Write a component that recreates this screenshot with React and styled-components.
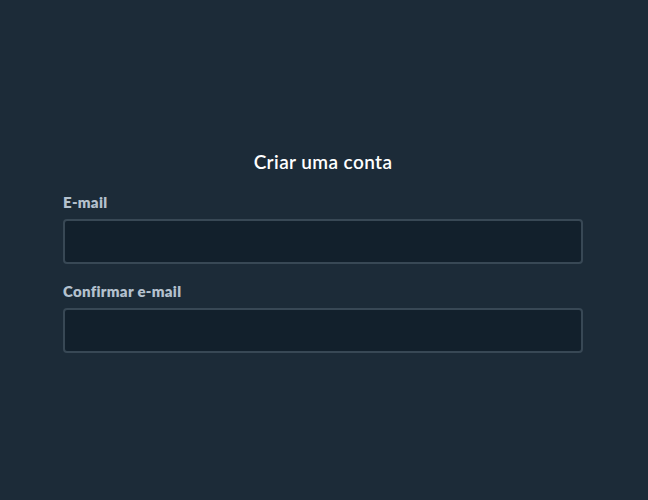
import React from 'react'
import styled, { createGlobalStyle } from 'styled-components'

const Global = createGlobalStyle`
  html, body {
    margin: 0;
    background: #1c2b38;
    font-family: Lato, "Open Sans", sans-serif;
  }
`

const Page = styled.div`
  min-height: 500px;
  display: flex;
  padding: 150px 0 0 63px;
  box-sizing: border-box;
`

const Form = styled.form`
  width: 520px;
  display: flex;
  flex-direction: column;
`

const Title = styled.h1`
  margin: 0 0 19px;
  text-align: center;
  color: #ffffff;
  font-size: 19px;
  font-weight: 600;
  letter-spacing: 0.4px;
  line-height: 24px;
`

const Field = styled.div`
  display: flex;
  flex-direction: column;
  margin-bottom: 18px;
`

const Label = styled.label`
  color: #b4c1ce;
  font-size: 15px;
  font-weight: 800;
  letter-spacing: 0.3px;
  line-height: 18px;
  margin-bottom: 8px;
`

const Input = styled.input`
  height: 45px;
  box-sizing: border-box;
  background: #12202c;
  border: 2px solid #384855;
  border-radius: 4px;
  color: #fff;
  font-size: 15px;
  padding: 0 12px;
  outline: none;
`

export default function App() {
  return (
    <>
      <Global />
      <Page>
        <Form>
          <Title>Criar uma conta</Title>
          <Field>
            <Label>E-mail</Label>
            <Input type="email" />
          </Field>
          <Field>
            <Label>Confirmar e-mail</Label>
            <Input type="email" />
          </Field>
        </Form>
      </Page>
    </>
  )
}
